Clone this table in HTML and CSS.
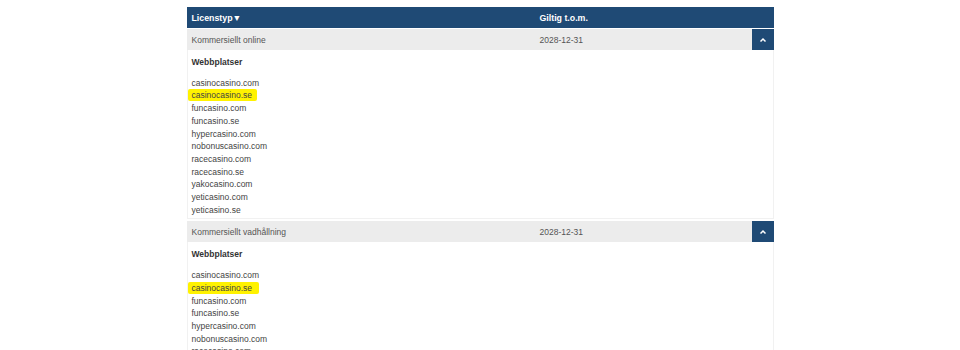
FILE: index.html
```html
<!DOCTYPE html>
<html lang="sv">
<head>
<meta charset="utf-8">
<link rel="stylesheet" href="styles.css">
</head>
<body>
<div class="table">
  <div class="head">
    <div class="col-type">Licenstyp▼</div>
    <div class="col-date">Giltig t.o.m.</div>
  </div>

  <div class="row">
    <div class="col-type">Kommersiellt online</div>
    <div class="col-date">2028-12-31</div>
    <div class="toggle"><svg width="8" height="6" viewBox="0 0 8 6"><polyline points="1.5,4.5 4,2 6.5,4.5" fill="none" stroke="#fff" stroke-width="1.5"/></svg></div>
  </div>
  <div class="detail">
    <div class="title">Webbplatser</div>
    <ul class="sites">
      <li>casinocasino.com</li>
      <li><span class="mark">casinocasino.se</span></li>
      <li>funcasino.com</li>
      <li>funcasino.se</li>
      <li>hypercasino.com</li>
      <li>nobonuscasino.com</li>
      <li>racecasino.com</li>
      <li>racecasino.se</li>
      <li>yakocasino.com</li>
      <li>yeticasino.com</li>
      <li>yeticasino.se</li>
    </ul>
  </div>

  <div class="row">
    <div class="col-type">Kommersiellt vadhållning</div>
    <div class="col-date">2028-12-31</div>
    <div class="toggle"><svg width="8" height="6" viewBox="0 0 8 6"><polyline points="1.5,4.5 4,2 6.5,4.5" fill="none" stroke="#fff" stroke-width="1.5"/></svg></div>
  </div>
  <div class="detail">
    <div class="title">Webbplatser</div>
    <ul class="sites">
      <li>casinocasino.com</li>
      <li><span class="mark mark-wide">casinocasino.se</span></li>
      <li>funcasino.com</li>
      <li>funcasino.se</li>
      <li>hypercasino.com</li>
      <li>nobonuscasino.com</li>
      <li>racecasino.com</li>
      <li>racecasino.se</li>
      <li>yakocasino.com</li>
      <li>yeticasino.com</li>
      <li>yeticasino.se</li>
    </ul>
  </div>
</div>
</body>
</html>
```

FILE: styles.css
```css
html, body {
  margin: 0;
  padding: 0;
  background: #fff;
}
body {
  padding-top: 7px;
  font-family: "Liberation Sans", Arial, sans-serif;
  font-size: 8.5px;
  color: #3a3a3a;
}
.table {
  width: 587px;
  margin: 0 auto;
}
.head {
  display: flex;
  align-items: center;
  height: 21px;
  background: #1f4a75;
  color: #fff;
  font-weight: bold;
  font-size: 8.8px;
}
.col-type {
  width: 348px;
  padding-left: 5px;
}
.col-date {
  flex: 1;
}
.row {
  display: flex;
  align-items: center;
  height: 21px;
  margin-top: 1px;
  background: #ececec;
  color: #555;
}
.toggle {
  width: 22px;
  height: 21px;
  background: #1f4a75;
  display: flex;
  align-items: center;
  justify-content: center;
}
.detail {
  border: 1px solid #f1f1f1;
  border-top: none;
  padding: 6px 5px 2px 4px;
  margin-bottom: 2px;
}
.title {
  font-weight: bold;
  line-height: 12.7px;
  color: #333;
  margin-bottom: 8px;
}
.sites {
  list-style: none;
  margin: 0;
  padding: 0;
  line-height: 12.7px;
  color: #444;
}
.mark {
  background: #fff200;
  margin-left: -4px;
  padding: 1px 5px 1px 4px;
  border-radius: 2px;
}
.mark-wide {
  padding-right: 7px;
}
```
